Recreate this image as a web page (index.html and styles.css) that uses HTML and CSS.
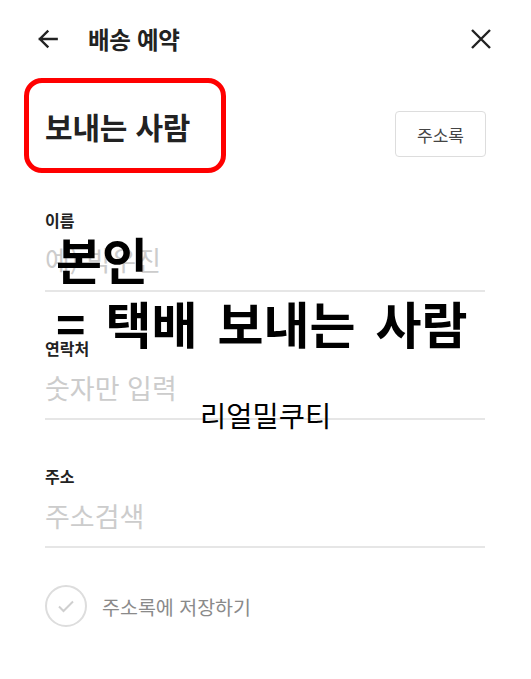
FILE: index.html
```html
<!DOCTYPE html>
<html lang="ko">
<head>
  <meta charset="UTF-8">
  <meta name="viewport" content="width=device-width, initial-scale=1.0">
  <title>배송 예약</title>
  <link rel="stylesheet" href="styles.css">
</head>
<body>
  <div class="screen">
    <header class="topbar">
      <div class="topbar-left">
        <svg class="icon-back" width="26" height="26" viewBox="0 0 24 24">
          <path d="M20 12H4.5M11.5 5l-7 7 7 7" fill="none" stroke="#222" stroke-width="2.2" stroke-linecap="square"/>
        </svg>
        <span class="topbar-title">배송 예약</span>
      </div>
      <svg class="icon-close" width="24" height="24" viewBox="0 0 24 24">
        <path d="M3 3l18 18M21 3L3 21" fill="none" stroke="#222" stroke-width="2.4"/>
      </svg>
    </header>

    <div class="section-head">
      <h2 class="section-title">보내는 사람</h2>
      <button class="btn-book">주소록</button>
    </div>

    <div class="field">
      <label>이름</label>
      <div class="placeholder">예) 박우진</div>
    </div>
    <div class="field">
      <label>연락처</label>
      <div class="placeholder">숫자만 입력</div>
    </div>
    <div class="field">
      <label>주소</label>
      <div class="placeholder">주소검색</div>
    </div>

    <div class="save-row">
      <span class="check">
        <svg width="22" height="22" viewBox="0 0 22 22">
          <path d="M4 11.5l4.5 4.5L18 6.5" fill="none" stroke="#cfcfcf" stroke-width="2"/>
        </svg>
      </span>
      <span class="save-text">주소록에 저장하기</span>
    </div>

    <!-- caption overlays -->
    <div class="caption caption-main">본인<br>= 택배 보내는 사람</div>
    <div class="caption caption-mark">리얼밀쿠티</div>
  </div>
</body>
</html>
```

FILE: styles.css
```css
body {
  margin: 0;
  background: #fff;
  font-family: "Noto Sans CJK KR", "Noto Sans", sans-serif;
  color: #222;
}
.screen {
  position: relative;
  width: 531px;
  height: 679px;
  overflow: hidden;
  padding: 0 46px 0 45px;
  box-sizing: border-box;
}
.topbar {
  display: flex;
  justify-content: space-between;
  align-items: center;
  height: 78px;
  margin-left: -10px;
  margin-right: -8px;
}
.topbar-left {
  display: flex;
  align-items: center;
}
.icon-back {
  margin-right: 27px;
}
.topbar-title {
  font-size: 23.5px;
  font-weight: bold;
  letter-spacing: -0.3px;
}
.section-head {
  display: flex;
  justify-content: space-between;
  align-items: center;
  margin-left: -21px;
}
.section-title {
  margin: 0;
  font-size: 30px;
  font-weight: bold;
  line-height: 31px;
  padding: 28px 31px 26px 16px;
  border: 5px solid #f00;
  border-radius: 18px;
  letter-spacing: -0.2px;
}
.btn-book {
  width: 91px;
  height: 46px;
  margin-top: 17px;
  margin-right: -1px;
  background: #fff;
  border: 1.5px solid #ddd;
  border-radius: 4px;
  font-family: inherit;
  font-size: 17px;
  color: #444;
}
.field {
  padding-top: 37px;
  padding-bottom: 14px;
  border-bottom: 2px solid #e6e6e6;
}
.field + .field {
  padding-top: 46px;
}
.field label {
  display: block;
  font-size: 16px;
  font-weight: bold;
  line-height: 20px;
  color: #222;
}
.placeholder {
  margin-top: 14px;
  font-size: 27px;
  line-height: 32px;
  color: #ccc;
}
.save-row {
  display: flex;
  align-items: center;
  margin-top: 37px;
}
.check {
  width: 38px;
  height: 38px;
  border: 2px solid #ddd;
  border-radius: 50%;
  display: flex;
  align-items: center;
  justify-content: center;
  margin-right: 15px;
}
.save-text {
  font-size: 19.5px;
  color: #8a8a8a;
}
.caption {
  position: absolute;
  color: #000;
  white-space: nowrap;
}
.caption-main {
  left: 56px;
  top: 226px;
  font-size: 50px;
  font-weight: bold;
  line-height: 64px;
  word-spacing: 6px;
}
.caption-mark {
  left: 200px;
  top: 395px;
  font-size: 28.5px;
  line-height: 40px;
}
```
